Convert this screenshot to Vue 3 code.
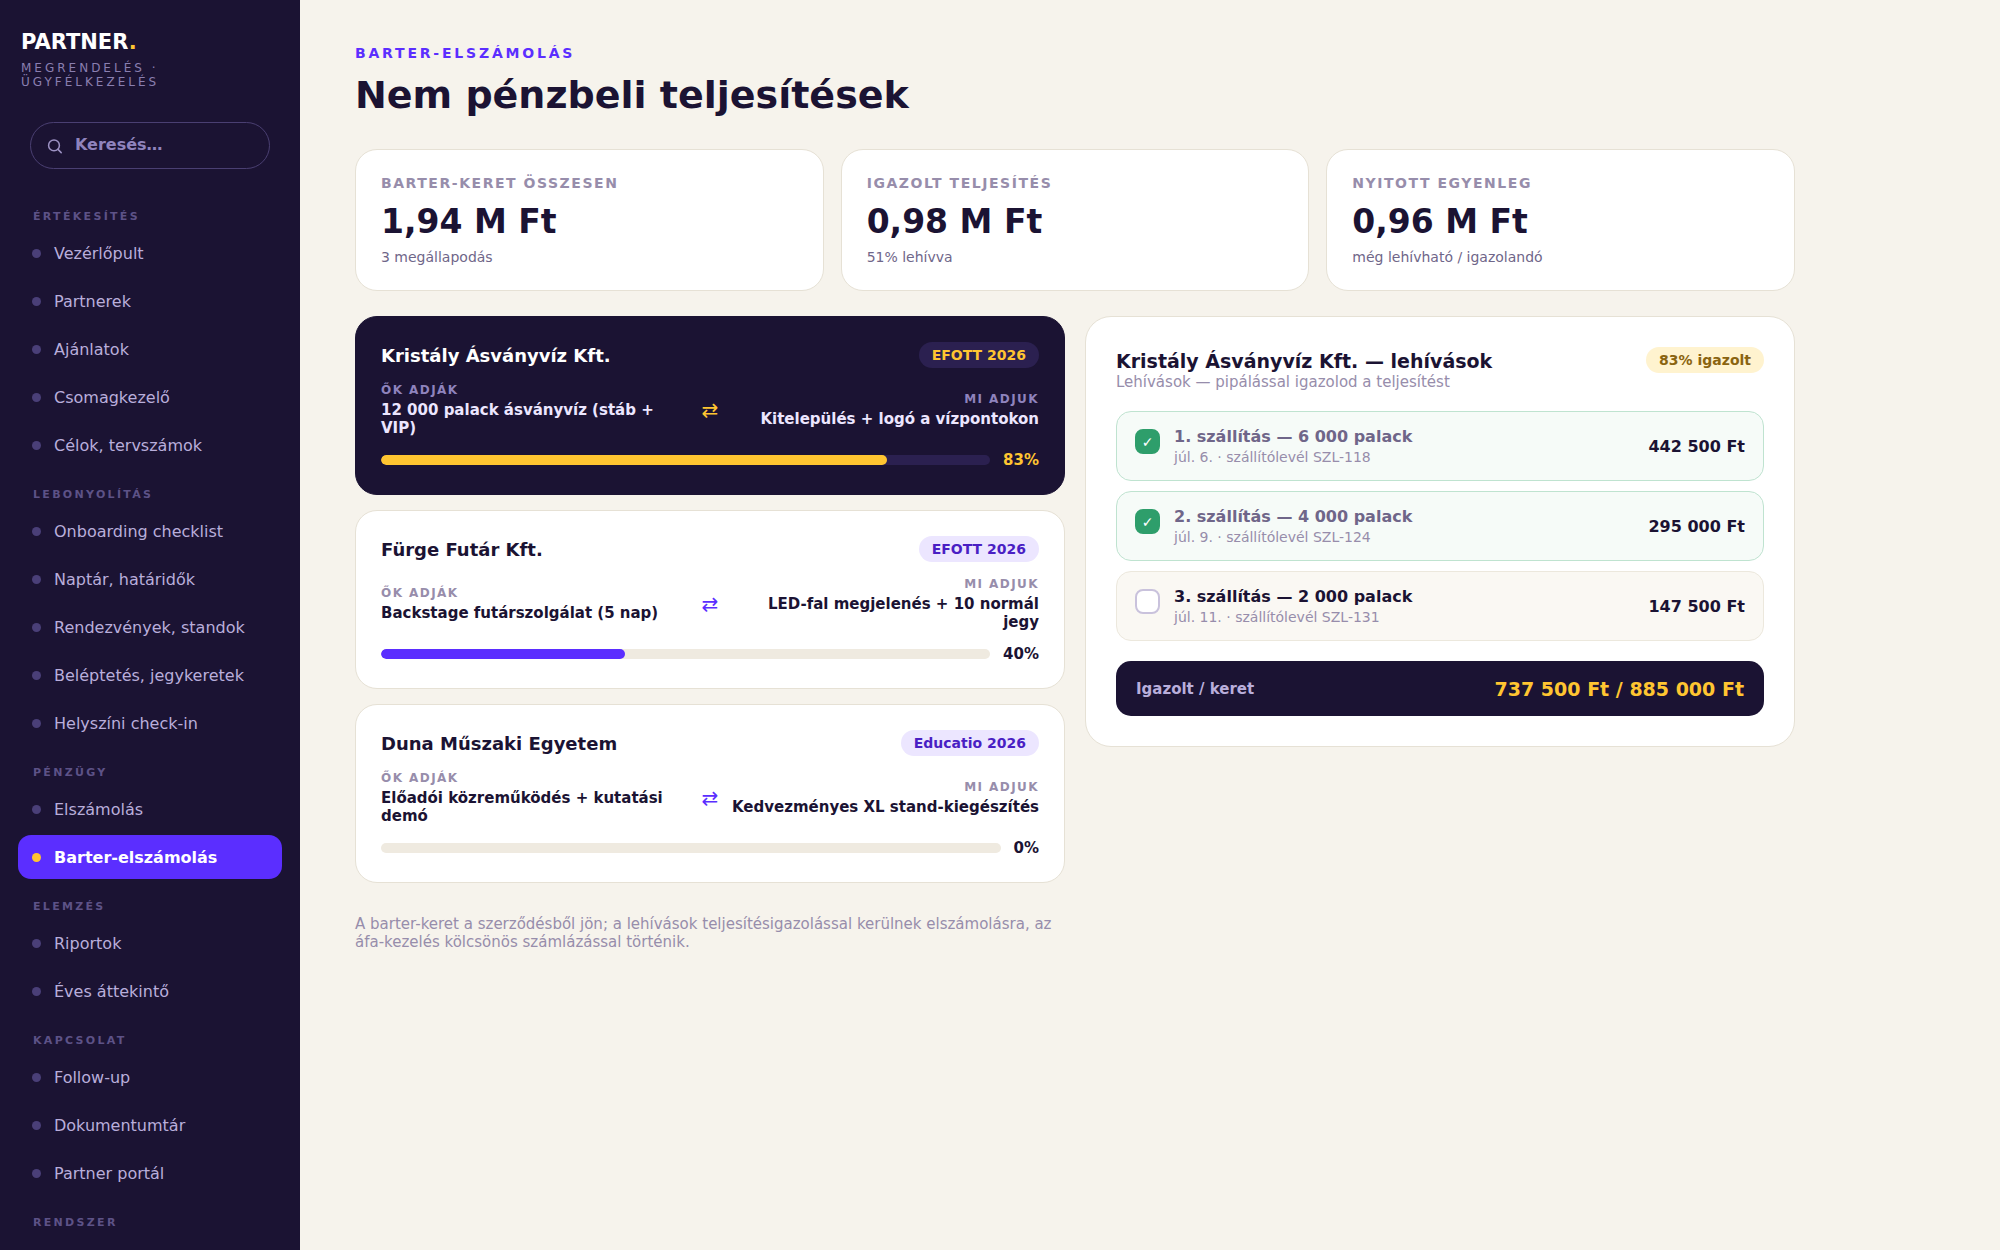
<script setup>
import { computed, reactive, ref } from "vue";

const active = ref("Barter-elszámolás");
const search = ref("");

const groups = [
	{
		title: "Értékesítés",
		items: [
			"Vezérlőpult",
			"Partnerek",
			"Ajánlatok",
			"Csomagkezelő",
			"Célok, tervszámok",
		],
	},
	{
		title: "Lebonyolítás",
		items: [
			"Onboarding checklist",
			"Naptár, határidők",
			"Rendezvények, standok",
			"Beléptetés, jegykeretek",
			"Helyszíni check-in",
		],
	},
	{ title: "Pénzügy", items: ["Elszámolás", "Barter-elszámolás"] },
	{ title: "Elemzés", items: ["Riportok", "Éves áttekintő"] },
	{ title: "Kapcsolat", items: ["Follow-up", "Dokumentumtár", "Partner portál"] },
	{ title: "Rendszer", items: [] },
];

const stats = [
	{ label: "Barter-keret összesen", value: "1,94 M Ft", note: "3 megállapodás" },
	{ label: "Igazolt teljesítés", value: "0,98 M Ft", note: "51% lehívva" },
	{
		label: "Nyitott egyenleg",
		value: "0,96 M Ft",
		note: "még lehívható / igazolandó",
	},
];

const deliveries = reactive([
	{
		title: "1. szállítás — 6 000 palack",
		note: "júl. 6. · szállítólevél SZL-118",
		amount: 442500,
		done: true,
	},
	{
		title: "2. szállítás — 4 000 palack",
		note: "júl. 9. · szállítólevél SZL-124",
		amount: 295000,
		done: true,
	},
	{
		title: "3. szállítás — 2 000 palack",
		note: "júl. 11. · szállítólevél SZL-131",
		amount: 147500,
		done: false,
	},
]);

const total = computed(() => deliveries.reduce((sum, d) => sum + d.amount, 0));
const confirmed = computed(() =>
	deliveries.filter((d) => d.done).reduce((sum, d) => sum + d.amount, 0)
);
const percent = computed(() => Math.round((confirmed.value / total.value) * 100));

const deals = computed(() => [
	{
		partner: "Kristály Ásványvíz Kft.",
		event: "EFOTT 2026",
		they: "12 000 palack ásványvíz (stáb + VIP)",
		we: "Kitelepülés + logó a vízpontokon",
		percent: percent.value,
		selected: true,
	},
	{
		partner: "Fürge Futár Kft.",
		event: "EFOTT 2026",
		they: "Backstage futárszolgálat (5 nap)",
		we: "LED-fal megjelenés + 10 normál jegy",
		percent: 40,
	},
	{
		partner: "Duna Műszaki Egyetem",
		event: "Educatio 2026",
		they: "Előadói közreműködés + kutatási demó",
		we: "Kedvezményes XL stand-kiegészítés",
		percent: 0,
	},
]);

const formatFt = function (n) {
	return String(n).replace(/\B(?=(\d{3})+$)/g, " ") + " Ft";
};
</script>

<template>
	<div class="app">
		<aside class="sidebar">
			<div class="brand">PARTNER<span class="brand-dot">.</span></div>
			<div class="brand-sub">Megrendelés · Ügyfélkezelés</div>
			<label class="search">
				<svg class="search-icon" viewBox="0 0 16 16" aria-hidden="true">
					<circle cx="7" cy="7.4" r="5.4" />
					<path d="M11 11.4l3.2 3.2" />
				</svg>
				<input
					v-model="search"
					class="search-input"
					type="text"
					placeholder="Keresés…"
					aria-label="Keresés"
				/>
			</label>
			<nav class="nav">
				<div v-for="group in groups" :key="group.title" class="nav-group">
					<div class="nav-title">{{ group.title }}</div>
					<a
						v-for="item in group.items"
						:key="item"
						href="#"
						class="nav-item"
						:class="{ active: item === active }"
						@click.prevent="active = item"
					>
						<span class="nav-dot" />
						{{ item }}
					</a>
				</div>
			</nav>
		</aside>

		<main class="main">
			<div class="eyebrow">Barter-elszámolás</div>
			<h1 class="page-title">Nem pénzbeli teljesítések</h1>

			<section class="stats">
				<div v-for="stat in stats" :key="stat.label" class="stat">
					<div class="stat-label">{{ stat.label }}</div>
					<div class="stat-value">{{ stat.value }}</div>
					<div class="stat-note">{{ stat.note }}</div>
				</div>
			</section>

			<section class="columns">
				<div class="deals">
					<article
						v-for="deal in deals"
						:key="deal.partner"
						class="deal"
						:class="{ selected: deal.selected }"
					>
						<div class="deal-head">
							<h2 class="deal-name">{{ deal.partner }}</h2>
							<span class="pill">{{ deal.event }}</span>
						</div>
						<div class="swap">
							<div>
								<div class="swap-label">Ők adják</div>
								<div class="swap-text">{{ deal.they }}</div>
							</div>
							<span class="swap-icon">⇄</span>
							<div class="swap-right">
								<div class="swap-label">Mi adjuk</div>
								<div class="swap-text">{{ deal.we }}</div>
							</div>
						</div>
						<div class="progress">
							<div class="progress-track">
								<div class="progress-fill" :style="{ width: deal.percent + '%' }" />
							</div>
							<span class="progress-value">{{ deal.percent }}%</span>
						</div>
					</article>
					<p class="footnote">
						A barter-keret a szerződésből jön; a lehívások teljesítésigazolással
						kerülnek elszámolásra, az áfa-kezelés kölcsönös számlázással történik.
					</p>
				</div>

				<div class="panel">
					<div class="panel-head">
						<div>
							<h2 class="panel-title">Kristály Ásványvíz Kft. — lehívások</h2>
							<div class="panel-sub">Lehívások — pipálással igazolod a teljesítést</div>
						</div>
						<span class="pill pill-gold">{{ percent }}% igazolt</span>
					</div>
					<div class="deliveries">
						<label
							v-for="delivery in deliveries"
							:key="delivery.title"
							class="delivery"
							:class="{ done: delivery.done }"
						>
							<input v-model="delivery.done" class="check" type="checkbox" />
							<span class="delivery-body">
								<span class="delivery-title">{{ delivery.title }}</span>
								<span class="delivery-note">{{ delivery.note }}</span>
							</span>
							<span class="delivery-amount">{{ formatFt(delivery.amount) }}</span>
						</label>
					</div>
					<div class="total">
						<span class="total-label">Igazolt / keret</span>
						<span class="total-value">
							{{ formatFt(confirmed) }} / {{ formatFt(total) }}
						</span>
					</div>
				</div>
			</section>
		</main>
	</div>
</template>

<style>
body {
	background: #f6f3ec;
}
</style>

<style scoped>
.app {
	display: flex;
	height: 100vh;
	overflow: hidden;
	color: #1b1333;
	background: #f6f3ec;
	font-family: "DejaVu Sans", sans-serif;
	font-size: 16px;
}

.app * {
	box-sizing: border-box;
}

.sidebar {
	flex: 0 0 300px;
	padding: 30px 18px 0;
	overflow: hidden;
	background: #1b1333;
}

.brand {
	padding-left: 3px;
	color: #fff;
	font-size: 21px;
	font-weight: 700;
	line-height: 24px;
}

.brand-dot {
	color: #ffc531;
}

.brand-sub {
	padding: 7px 60px 0 3px;
	color: #8a7fb0;
	font-size: 12px;
	letter-spacing: 3px;
	line-height: 14px;
	text-transform: uppercase;
}

.search {
	display: flex;
	align-items: center;
	gap: 12px;
	height: 47px;
	margin: 33px 12px 0;
	padding: 0 16px;
	border: 1px solid #4a3f72;
	border-radius: 24px;
}

.search-icon {
	flex: none;
	width: 16px;
	height: 16px;
	fill: none;
	stroke: #9d92c4;
	stroke-width: 1.5;
	stroke-linecap: round;
}

.search-input {
	width: 100%;
	padding: 0 0 2px;
	border: 0;
	outline: 0;
	color: #fff;
	background: transparent;
	font-family: inherit;
	font-size: 16px;
	font-weight: 700;
}

.search-input::placeholder {
	color: #8f83bd;
	opacity: 1;
}

.nav {
	margin-top: 34px;
}

.nav-group {
	padding-bottom: 10px;
}

.nav-title {
	height: 28px;
	padding: 7px 15px 0;
	color: #5d5287;
	font-size: 11px;
	font-weight: 700;
	letter-spacing: 0.21em;
	line-height: 14px;
	text-transform: uppercase;
}

.nav-item {
	display: flex;
	align-items: center;
	gap: 13px;
	height: 44px;
	margin-bottom: 4px;
	padding: 0 14px;
	border-radius: 13px;
	color: #b9aedb;
	text-decoration: none;
}

.nav-item.active {
	color: #fff;
	background: #5b2eff;
	font-weight: 700;
}

.nav-dot {
	width: 9px;
	height: 9px;
	border-radius: 50%;
	background: #4a3f78;
}

.nav-item.active .nav-dot {
	background: #ffc531;
}

.main {
	flex: 1;
	max-width: 1550px;
	padding: 45px 55px;
}

.eyebrow {
	color: #5b2eff;
	font-size: 14px;
	font-weight: 700;
	letter-spacing: 0.2em;
	line-height: 16px;
	text-transform: uppercase;
}

.page-title {
	margin: 11px 0 31px;
	font-size: 38px;
	font-weight: 700;
	line-height: 46px;
}

.stats {
	display: grid;
	grid-template-columns: repeat(3, 1fr);
	gap: 17px;
}

.stat {
	padding: 25px;
	border: 1px solid #e6e1d5;
	border-radius: 22px;
	background: #fff;
}

.stat-label {
	color: #978dab;
	font-size: 14px;
	font-weight: 700;
	letter-spacing: 0.11em;
	line-height: 16px;
	text-transform: uppercase;
}

.stat-value {
	margin-top: 12px;
	font-size: 33px;
	font-weight: 700;
	line-height: 38px;
}

.stat-note {
	margin-top: 8px;
	color: #6f6689;
	font-size: 14px;
	line-height: 16px;
}

.columns {
	display: grid;
	grid-template-columns: 1fr 1fr;
	align-items: start;
	gap: 20px;
	margin-top: 25px;
}

.deals {
	display: grid;
	gap: 15px;
}

.deal {
	padding: 25px;
	border: 1px solid #e6e1d5;
	border-radius: 22px;
	background: #fff;
}

.deal.selected {
	border-color: #1b1333;
	color: #fff;
	background: #1b1333;
}

.deal-head,
.panel-head {
	display: flex;
	justify-content: space-between;
}

.deal-head {
	align-items: center;
}

.deal-name {
	margin: 0;
	font-size: 18px;
	font-weight: 700;
}

.pill {
	flex: none;
	padding: 5px 13px;
	border-radius: 20px;
	color: #4a1fc4;
	background: #ece6ff;
	font-size: 14px;
	font-weight: 700;
	line-height: 16px;
}

.deal.selected .pill {
	color: #ffc531;
	background: #2b2050;
}

.pill-gold {
	color: #8a6410;
	background: #fff3cf;
}

.swap {
	display: grid;
	grid-template-columns: 1fr auto 1fr;
	align-items: center;
	gap: 13px;
	margin-top: 15px;
}

.swap-right {
	text-align: right;
}

.swap-label {
	margin-bottom: 3px;
	color: #978dab;
	font-size: 12px;
	font-weight: 700;
	letter-spacing: 0.12em;
	line-height: 15px;
	text-transform: uppercase;
}

.swap-text {
	font-size: 15px;
	font-weight: 700;
	line-height: 18px;
}

.deal.selected .swap-label {
	color: #8f83bd;
}

.deal.selected .swap-text {
	color: #ece6ff;
}

.swap-icon {
	color: #5b2eff;
	font-size: 20px;
}

.deal.selected .swap-icon,
.deal.selected .progress-value {
	color: #ffc531;
}

.progress {
	display: flex;
	align-items: center;
	gap: 13px;
	margin-top: 14px;
}

.progress-track {
	flex: 1;
	height: 10px;
	border-radius: 5px;
	overflow: hidden;
	background: #efeae0;
}

.progress-fill {
	height: 100%;
	border-radius: 5px;
	background: #5b2eff;
}

.deal.selected .progress-track {
	background: #2b2050;
}

.deal.selected .progress-fill {
	background: #ffc531;
}

.progress-value {
	font-size: 15px;
	font-weight: 700;
	line-height: 18px;
}

.footnote {
	margin: 17px 0 0;
	color: #978dab;
	font-size: 15px;
	line-height: 18px;
}

.panel {
	padding: 30px;
	border: 1px solid #e6e1d5;
	border-radius: 26px;
	background: #fff;
}

.panel-head {
	align-items: flex-start;
}

.panel-title {
	margin: 2px 0 0;
	font-size: 19px;
	font-weight: 700;
	line-height: 24px;
}

.panel-sub {
	color: #978dab;
	font-size: 15px;
	line-height: 18px;
}

.deliveries {
	display: grid;
	gap: 10px;
	margin-top: 20px;
}

.delivery {
	display: flex;
	align-items: center;
	gap: 14px;
	height: 70px;
	padding: 0 18px;
	border: 1px solid #ece8dd;
	border-radius: 15px;
	background: #faf8f3;
}

.delivery.done {
	border-color: #bfe3d0;
	background: #f6fbf8;
}

.check {
	display: grid;
	flex: none;
	place-items: center;
	align-self: flex-start;
	width: 25px;
	height: 25px;
	margin: 17px 0 0;
	appearance: none;
	border: 2px solid #c9c2dc;
	border-radius: 8px;
	color: #fff;
	background: #fff;
	font-family: inherit;
	font-size: 14px;
	line-height: 18px;
}

.check:checked {
	border-color: #2e9e6b;
	background: #2e9e6b;
}

.check:checked::before {
	content: "✓";
}

.delivery-body {
	display: grid;
	flex: 1;
	gap: 2px;
}

.delivery-title {
	font-size: 16px;
	font-weight: 700;
	line-height: 19px;
}

.done .delivery-title {
	color: #6f6689;
}

.delivery-note {
	color: #978dab;
	font-size: 14px;
	line-height: 18px;
}

.delivery-amount {
	font-size: 16px;
	font-weight: 700;
}

.total {
	display: flex;
	align-items: center;
	justify-content: space-between;
	height: 55px;
	margin-top: 20px;
	padding: 0 20px;
	border-radius: 15px;
	background: #1b1333;
}

.total-label {
	color: #b9aedb;
	font-size: 15px;
	font-weight: 700;
}

.total-value {
	color: #ffc531;
	font-size: 19px;
	font-weight: 700;
}
</style>
